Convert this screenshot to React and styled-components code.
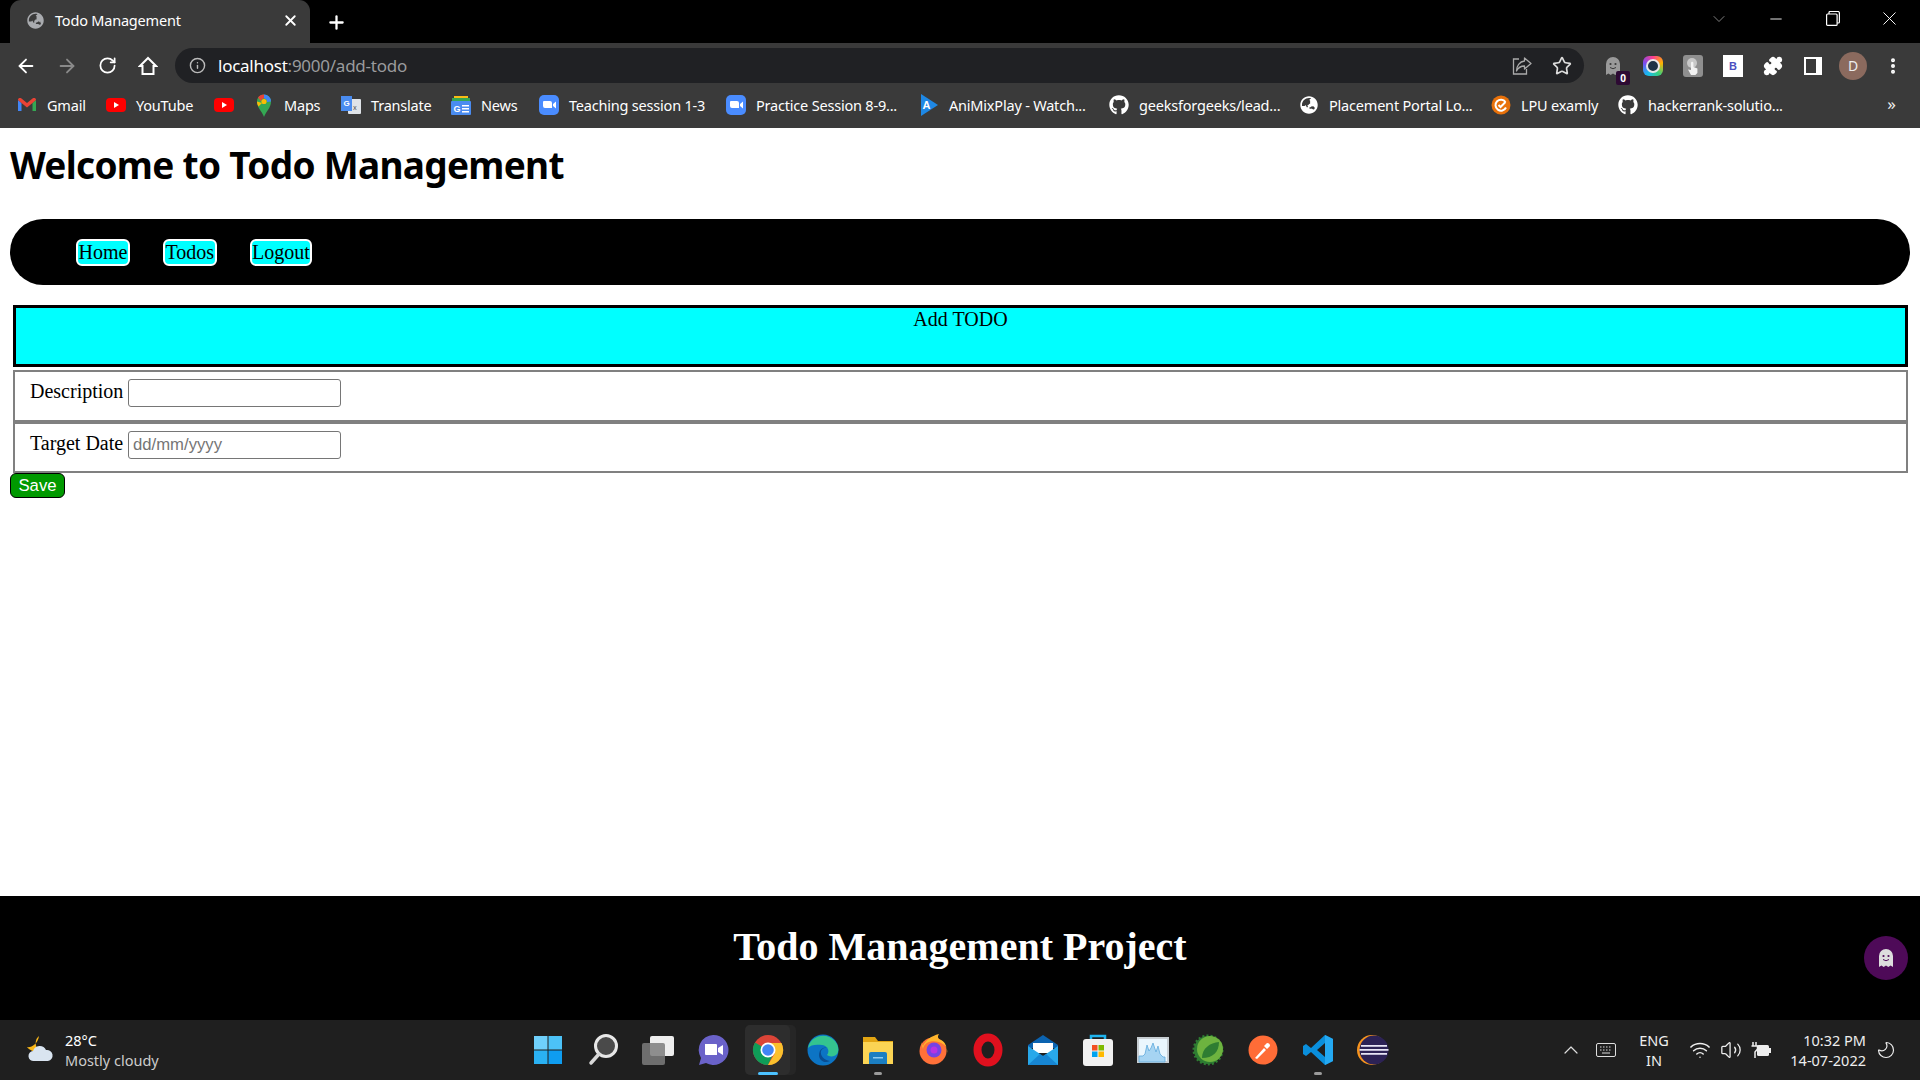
import styled, { createGlobalStyle } from 'styled-components';
import { ArrowLeft, ArrowRight, RotateCw, Info, Star, Plus, X, ChevronDown, Minus, ChevronUp, EllipsisVertical, Puzzle, Wifi, Volume2, Moon } from 'lucide-react';
import { FaGithub, FaGlobeAsia } from 'react-icons/fa';

const GlobalStyle = createGlobalStyle`
    html, body { margin: 0; padding: 0; height: 100%; background: #fff; }
    body { font-family: "Liberation Serif", serif; }
    #root { height: 100%; }
    * { box-sizing: border-box; }
`;

const uiFont = `"Noto Sans", "Open Sans", sans-serif`;

const GhostShape = ({ size = 20, color = '#ddd', face = '#4e0a58' }) => (
    <svg width={size} height={size} viewBox="0 0 20 20">
        <path d="M3 19V8a7 7 0 0 1 14 0v11l-2.400-1.600L12.300 19 10 17.400 7.700 19l-2.300-1.600z" fill={color} />
        <circle cx="7.500" cy="8" r="1.100" fill={face} />
        <circle cx="12.500" cy="8" r="1.100" fill={face} />
        <path d="M7 11.500q3 2.500 6 0" stroke={face} strokeWidth="1" fill="none" />
    </svg>
);

const ZoomIcon = () => (
    <svg width="20" height="20" viewBox="0 0 20 20">
        <rect width="20" height="20" rx="5" fill="#4a8cff" />
        <path d="M4 7a1 1 0 0 1 1-1h6a2 2 0 0 1 2 2v5H6a2 2 0 0 1-2-2zM14 9l3-2.500v7L14 11z" fill="#fff" />
    </svg>
);

const GmailIcon = () => (
    <svg width="20" height="20" viewBox="0 0 20 20">
        <path d="M1 5v11h3.500V8z" fill="#4285f4" />
        <path d="M15.500 8v8H19V5z" fill="#34a853" />
        <path d="M1 5c0-2 2-2.500 3.500-1.500L10 8l5.500-4.500C17 2.500 19 3 19 5l-3.500 3L10 12.500 4.500 8z" fill="#ea4335" />
    </svg>
);

const YoutubeIcon = () => (
    <svg width="20" height="20" viewBox="0 0 20 20">
        <rect y="3" width="20" height="14" rx="4" fill="#f00" />
        <path d="M8 7l5 3-5 3z" fill="#fff" />
    </svg>
);

const MapsIcon = () => (
    <svg width="20" height="24" viewBox="0 0 20 24">
        <path d="M10 24C8 18 3 15 3 8.500a7 7 0 0 1 14 0C17 15 12 18 10 24z" fill="#34a853" />
        <path d="M4 4.500A7 7 0 0 1 10 1.500v4a3 3 0 0 0-3 3z" fill="#ea4335" />
        <path d="M10 1.500a7 7 0 0 1 7 7l-4 .5a3 3 0 0 0-3-3.500z" fill="#4285f4" />
        <path d="M3 8.500c0 2 .5 3.500 1.500 5L8 10z" fill="#fbbc04" />
        <circle cx="10" cy="8.500" r="2.600" fill="#fbbc04" />
    </svg>
);

const TranslateIcon = () => (
    <svg width="20" height="20" viewBox="0 0 20 20">
        <rect x="7" y="4" width="13" height="15" rx="1" fill="#dfe3e8" />
        <path d="M0 1h11v15H0z" fill="#4a8cf0" />
        <text x="2.500" y="11" fontSize="8" fontWeight="700" fontFamily="Liberation Sans" fill="#fff">G</text>
        <text x="12" y="15" fontSize="7" fontFamily="Noto Sans" fill="#555">x</text>
    </svg>
);

const NewsIcon = () => (
    <svg width="20" height="20" viewBox="0 0 20 20">
        <path d="M3 1h14v4H3z" fill="#f9bc15" />
        <path d="M1 3h18v4H1z" fill="#34a853" />
        <rect y="6" width="20" height="14" rx="1" fill="#4a8cf0" />
        <text x="2.500" y="16.500" fontSize="9" fontWeight="700" fontFamily="Liberation Sans" fill="#fff">G</text>
        <path d="M11 10h7v1.500h-7zM11 13h7v1.500h-7zM11 16h7v1.500h-7z" fill="#fff" />
    </svg>
);

const AnimixIcon = () => (
    <svg width="20" height="24" viewBox="0 0 20 24">
        <path d="M2 1l17 11L2 23z" fill="#1e88e5" />
        <text x="3.500" y="16" fontSize="11" fontWeight="700" fontFamily="Liberation Sans" fill="#fff">A</text>
    </svg>
);

const LpuIcon = () => (
    <svg width="20" height="20" viewBox="0 0 20 20">
        <circle cx="10" cy="10" r="9.500" fill="#e8710a" />
        <path d="M14.500 7A5.500 5.500 0 1 0 15 12.500" stroke="#fff" strokeWidth="2" fill="none" />
        <path d="M7.500 10l2 2 5-5" stroke="#fff" strokeWidth="2" fill="none" />
    </svg>
);

const bookmarks = [
    { icon: <GmailIcon />, label: 'Gmail', width: 39 },
    { icon: <YoutubeIcon />, label: 'YouTube', width: 58 },
    { icon: <YoutubeIcon />, label: '', width: 0 },
    { icon: <MapsIcon />, label: 'Maps', width: 37 },
    { icon: <TranslateIcon />, label: 'Translate', width: 60 },
    { icon: <NewsIcon />, label: 'News', width: 38 },
    { icon: <ZoomIcon />, label: 'Teaching session 1-3', width: 137 },
    { icon: <ZoomIcon />, label: 'Practice Session 8-9...', width: 143 },
    { icon: <AnimixIcon />, label: 'AniMixPlay - Watch...', width: 140 },
    { icon: <FaGithub size={20} color="#fff" />, label: 'geeksforgeeks/lead...', width: 140 },
    { icon: <FaGlobeAsia size={18} color="#fff" />, label: 'Placement Portal Lo...', width: 142 },
    { icon: <LpuIcon />, label: 'LPU examly', width: 77 },
    { icon: <FaGithub size={20} color="#fff" />, label: 'hackerrank-solutio...', width: 135 },
];

const taskIcons = [
    <svg width="32" height="32" viewBox="0 0 32 32" key="win">
        <path d="M2 2h13.500v13.500H2z" fill="#6fd0fb" /><path d="M16.500 2H30v13.500H16.500z" fill="#4cc2f7" />
        <path d="M2 16.500h13.500V30H2z" fill="#2ab1f3" /><path d="M16.500 16.500H30V30H16.500z" fill="#0f9df0" />
    </svg>,
    <svg width="32" height="34" viewBox="0 0 32 34" key="search">
        <circle cx="19" cy="13" r="10.500" fill="#4a4a4a" stroke="#e8e8e8" strokeWidth="3" />
        <path d="M12 21l-8 9" stroke="#d8d8d8" strokeWidth="3.500" strokeLinecap="round" />
    </svg>,
    <svg width="34" height="32" viewBox="0 0 34 32" key="views">
        <rect x="9" y="2" width="24" height="20" rx="2" fill="#eee" />
        <rect x="1" y="9" width="23" height="22" rx="2" fill="#7c7c7c" opacity="0.850" />
    </svg>,
    <svg width="34" height="34" viewBox="0 0 34 34" key="teams">
        <path d="M17 2a15 15 0 1 1-7 28l-7 2 2-7A15 15 0 0 1 17 2z" fill="#6a62c9" />
        <path d="M9 11h11a1 1 0 0 1 1 1v10H10a1 1 0 0 1-1-1zM22 15l5-3v10l-5-3z" fill="#fff" />
    </svg>,
    <svg width="32" height="32" viewBox="0 0 32 32" key="chrome">
        <circle cx="16" cy="16" r="15" fill="#db4437" />
        <path d="M16 16L3 8.500A15 15 0 0 0 16 31l7-15z" fill="#0f9d58" />
        <path d="M16 9h13.500A15 15 0 0 1 16 31l7-12z" fill="#fbc02d" />
        <circle cx="16" cy="16" r="7.500" fill="#fff" /><circle cx="16" cy="16" r="5.800" fill="#4285f4" />
    </svg>,
    <svg width="34" height="34" viewBox="0 0 34 34" key="edge">
        <circle cx="17" cy="17" r="15.500" fill="#0c74c4" />
        <path d="M2 15C4 3 20-2 29 8c4 5 4 10 2 13-2 3-8 3-10 1 3-4 1-9-5-10C10 11 4 12 2 15z" fill="#34c48f" />
        <path d="M13 22c0-6 5-9 9-7-2-1-6 0-7 3-1 5 3 9 9 10-6 3-11-1-11-6z" fill="#0a4d91" />
    </svg>,
    <svg width="32" height="32" viewBox="0 0 32 32" key="folder">
        <path d="M1 3h12l3 4h15v4H1z" fill="#e3a512" />
        <path d="M1 8h30v22H1z" fill="#fbd454" />
        <path d="M7 20a2 2 0 0 1 2-2h14a2 2 0 0 1 2 2v10H7z" fill="#1b7ec2" />
        <path d="M11 23h10v1.500H11z" fill="#8ccbf0" />
    </svg>,
    <svg width="32" height="34" viewBox="0 0 32 34" key="firefox">
        <circle cx="16" cy="18" r="13.500" fill="#ff7139" />
        <path d="M4 9l2 4C9 7 14 3 22 1c-2 3-1 5 2 6 5 2 6 8 6 13 3-12-22-17-24-4z" fill="#ffb52c" />
        <circle cx="17" cy="17" r="7.500" fill="#7543e3" />
        <circle cx="17" cy="17" r="3.500" fill="#b833e1" />
    </svg>,
    <svg width="32" height="34" viewBox="0 0 32 34" key="opera">
        <ellipse cx="16" cy="17" rx="10.500" ry="12.500" fill="none" stroke="#e0101e" strokeWidth="8" />
    </svg>,
    <svg width="32" height="30" viewBox="0 0 32 30" key="mail">
        <path d="M1 10L16 0l15 10v3H1z" fill="#0b63b0" />
        <path d="M6 8h20v10H6z" fill="#fff" />
        <path d="M1 11l15 10 15-10v19H1z" fill="#28a8ea" />
        <path d="M1 30l12-11 3 2 3-2 12 11z" fill="#0f78c9" opacity="0.700" />
    </svg>,
    <svg width="32" height="34" viewBox="0 0 32 34" key="store">
        <path d="M9 8V3h14v5" fill="none" stroke="#1fb5f0" strokeWidth="2.500" />
        <rect x="1" y="6" width="30" height="27" rx="3" fill="#f1f1f1" />
        <path d="M10 12h5.500v5.500H10z" fill="#f25022" /><path d="M16.500 12H22v5.500h-5.500z" fill="#7fba00" />
        <path d="M10 18.500h5.500V24H10z" fill="#00a4ef" /><path d="M16.500 18.500H22V24h-5.500z" fill="#ffb900" />
    </svg>,
    <svg width="32" height="26" viewBox="0 0 32 26" key="monitor">
        <rect width="32" height="26" fill="#c7cdd2" />
        <rect x="2" y="2" width="28" height="22" fill="#eaf6fd" />
        <path d="M2 19h4l2-2 2-9 2 6 2-3 2-5 3 9 2-6 2 8 3 3 2 0v5H2z" fill="#a6d4f2" stroke="#5fa9dc" strokeWidth="0.800" />
    </svg>,
    <svg width="32" height="32" viewBox="0 0 32 32" key="spring">
        <circle cx="16" cy="16" r="14" fill="#2e7d32" stroke="#2e7d32" strokeWidth="3" strokeDasharray="2 2" />
        <circle cx="18" cy="15" r="13" fill="#6db33f" />
        <path d="M10 24C10 14 18 9 27 8c0 10-6 16-17 16z" fill="#2e7d32" />
    </svg>,
    <svg width="30" height="30" viewBox="0 0 30 30" key="postman">
        <circle cx="15" cy="15" r="14.500" fill="#ff6c37" />
        <path d="M7 23l9-10 2 2-9 9zM16 11l3-3a3 3 0 0 1 3 3l-3 3z" fill="#fff" />
    </svg>,
    <svg width="32" height="32" viewBox="0 0 32 32" key="vscode">
        <path d="M23 1l8 4v22l-8 4L9 18l-5 4-3-2v-8l3-2 5 4zM23 9l-8 7 8 7z" fill="#0a8fdc" />
        <path d="M23 1l8 4v22l-8 4z" fill="#24a9f2" />
    </svg>,
    <svg width="32" height="32" viewBox="0 0 32 32" key="eclipse">
        <circle cx="15" cy="16" r="15" fill="#f7941e" />
        <circle cx="17" cy="16" r="14.500" fill="#2c2255" />
        <path d="M4 11h26v1.800H4zM2.500 15h29v1.800h-29zM4 19h26v1.800H4z" fill="#e8e6f5" />
    </svg>,
];

const App = () => {
    return (
        <>
            <GlobalStyle />
            <Screen>
                <TabStrip>
                    <Tab>
                        <FaGlobeAsia size={17} color="#a9abaf" />
                        <TabTitle>Todo Management</TabTitle>
                        <X size={17} color="#fff" strokeWidth={2.6} />
                    </Tab>
                    <NewTab><Plus size={21} color="#fff" strokeWidth={2.6} /></NewTab>
                    <WindowControls>
                        <ChevronDown size={20} color="#999" strokeWidth={1} />
                        <Minus size={18} color="#fff" strokeWidth={1.200} />
                        <svg width="14" height="15" viewBox="0 0 14 15" fill="none" stroke="#fff" strokeWidth="1.200">
                            <rect x="0.600" y="3" width="10.500" height="11.400" rx="1" />
                            <path d="M3 3V1.500a1 1 0 0 1 1-1h8a1.500 1.500 0 0 1 1.400 1.400V11a1 1 0 0 1-1 1h-1.300" />
                        </svg>
                        <X size={23} color="#fff" strokeWidth={1} />
                    </WindowControls>
                </TabStrip>
                <Toolbar>
                    <NavIcons>
                        <ArrowLeft size={22} color="#fff" strokeWidth={2} />
                        <ArrowRight size={22} color="#8a8a8a" strokeWidth={2} />
                        <RotateCw size={19} color="#fff" strokeWidth={2.200} />
                        <svg width="20" height="20" viewBox="0 0 20 20" fill="none" stroke="#fff" strokeWidth="2">
                            <path d="M10 2L2 10h2.500v8h11v-8H18z" strokeLinejoin="miter" />
                        </svg>
                    </NavIcons>
                    <AddressBar>
                        <Info size={17} color="#bbb" strokeWidth={2} />
                        <Url><b>localhost</b>:9000/add-todo</Url>
                        <AddressEnd>
                            <svg width="20" height="20" viewBox="0 0 20 20" fill="none" stroke="#aaa" strokeWidth="1.300">
                                <path d="M7 3H1.500v15h13v-5" />
                                <path d="M12.500 2L19 7.500 12.500 13V10C8 10 6 12 4.500 15c0-5 3-9.500 8-10z" strokeLinejoin="round" />
                            </svg>
                            <Star size={20} color="#ddd" strokeWidth={2} />
                        </AddressEnd>
                    </AddressBar>
                    <Extensions>
                        <ExtSlot>
                            <GhostShape size={20} color="#9a9a9a" face="#3a3a3a" />
                            <Badge>0</Badge>
                        </ExtSlot>
                        <ExtSlot>
                            <RainbowRing><InnerLens /></RainbowRing>
                        </ExtSlot>
                        <ExtSlot>
                            <GreyTile>
                                <svg width="14" height="18" viewBox="0 0 14 18">
                                    <circle cx="6" cy="6" r="5" fill="#c8c8c8" />
                                    <path d="M5 6a1.200 1.200 0 0 1 2.400 0v4l4 1.500V16l-2 2H5L2 12.500 5 13z" fill="#f2f2f2" />
                                </svg>
                            </GreyTile>
                        </ExtSlot>
                        <ExtSlot><BTile>B</BTile></ExtSlot>
                        <ExtSlot><Puzzle size={20} color="#fff" fill="#fff" /></ExtSlot>
                        <ExtSlot><SidePanel /></ExtSlot>
                        <ExtSlot><Avatar>D</Avatar></ExtSlot>
                        <ExtSlot><EllipsisVertical size={20} color="#fff" strokeWidth={2.800} /></ExtSlot>
                    </Extensions>
                </Toolbar>
                <BookmarkBar>
                    {bookmarks.map((item, i) => (
                        <Bookmark key={`${item.label}-${i}`}>
                            <BookmarkIcon>{item.icon}</BookmarkIcon>
                            {item.label && <BookmarkLabel $width={item.width}>{item.label}</BookmarkLabel>}
                        </Bookmark>
                    ))}
                    <MoreBookmarks>»</MoreBookmarks>
                </BookmarkBar>

                <Page>
                    <Heading>Welcome to Todo Management</Heading>
                    <NavBar>
                        <NavButton>Home</NavButton>
                        <NavButton>Todos</NavButton>
                        <NavButton>Logout</NavButton>
                    </NavBar>
                    <FormTable>
                        <FormTitle>Add TODO</FormTitle>
                        <FormRow>
                            <FieldLabel>Description</FieldLabel>
                            <FieldInput type="text" />
                        </FormRow>
                        <FormRow>
                            <FieldLabel>Target Date</FieldLabel>
                            <FieldInput type="text" placeholder="dd/mm/yyyy" />
                        </FormRow>
                    </FormTable>
                    <SaveButton>Save</SaveButton>
                </Page>

                <Footer>
                    <FooterTitle>Todo Management Project</FooterTitle>
                    <FloatingGhost><GhostShape size={20} /></FloatingGhost>
                </Footer>

                <Taskbar>
                    <Weather>
                        <svg width="30" height="30" viewBox="0 0 30 30">
                            <path d="M14 1a9 9 0 0 0 0 14 9 9 0 0 1-12-3c4 1 11-3 12-11z" fill="#f9b719" />
                            <path d="M9 26a5 5 0 0 1-1-10 7 7 0 0 1 13-1 5.500 5.500 0 0 1 2 11z" fill="#d9e4f0" />
                        </svg>
                        <WeatherText>
                            <span>28°C</span>
                            <WeatherSub>Mostly cloudy</WeatherSub>
                        </WeatherText>
                    </Weather>
                    <TaskIcons>
                        {taskIcons.map((icon, i) => (
                            <TaskIcon key={i} $active={i === 4} $dot={i === 6 || i === 14}>{icon}</TaskIcon>
                        ))}
                    </TaskIcons>
                    <Tray>
                        <ChevronUp size={24} color="#ddd" strokeWidth={1.200} />
                        <svg width="20" height="14" viewBox="0 0 20 14">
                            <rect x="0.500" y="0.500" width="19" height="13" rx="1.500" fill="none" stroke="#ddd" />
                            <path d="M4 4h1.500M7 4h1.500M10 4h1.500M13 4h1.500M4 7h1.500M7 7h1.500M10 7h1.500M13 7h1.500M6 10h8" stroke="#ddd" />
                        </svg>
                        <Lang>ENG<br />IN</Lang>
                        <Wifi size={22} color="#eee" strokeWidth={1.600} />
                        <Volume2 size={22} color="#eee" strokeWidth={1.400} />
                        <svg width="20" height="18" viewBox="0 0 20 18">
                            <rect x="6" y="4" width="12" height="11" rx="1.500" fill="#eee" />
                            <rect x="18" y="7" width="2" height="5" fill="#eee" />
                            <path d="M2 1v4M5 1v4M0.500 5h6v3L4 11v6" stroke="#eee" strokeWidth="1.500" fill="none" />
                        </svg>
                        <Clock>10:32 PM<br />14-07-2022</Clock>
                        <FlippedMoon size={20} color="#eee" strokeWidth={1.400} />
                    </Tray>
                </Taskbar>
            </Screen>
        </>
    );
};

export default App;

const Screen = styled.div`
    display: flex;
    flex-direction: column;
    height: 100vh;
    overflow: hidden;
`;

const TabStrip = styled.header`
    display: flex;
    align-items: flex-end;
    height: 43px;
    padding-left: 10px;
    background: #000;
`;

const Tab = styled.div`
    display: flex;
    align-items: center;
    width: 300px;
    height: 43px;
    padding: 0 11px 3px 17px;
    border-radius: 11px 11px 0 0;
    background: #3a3a3a;
    color: #fff;
`;

const TabTitle = styled.span`
    flex: 1;
    margin-left: 11px;
    font: 14.500px ${uiFont};
    letter-spacing: -0.200px;
`;

const NewTab = styled.div`
    display: flex;
    align-items: center;
    height: 41px;
    margin-left: 16px;
`;

const WindowControls = styled.div`
    display: grid;
    grid-template-columns: repeat(4, 57px);
    justify-items: center;
    align-items: center;
    height: 37px;
    margin-left: auto;
    padding-right: 2px;
    align-self: flex-start;
`;

const Toolbar = styled.div`
    display: flex;
    align-items: center;
    height: 43px;
    padding: 5px 0 3px 0;
    background: #3a3a3a;
`;

const NavIcons = styled.div`
    display: grid;
    grid-template-columns: repeat(4, 40.500px);
    justify-items: center;
    align-items: center;
    width: 175px;
    padding-left: 6px;
`;

const AddressBar = styled.div`
    display: flex;
    align-items: center;
    width: 1409px;
    height: 35px;
    padding: 0 12px 0 14px;
    border-radius: 18px;
    background: #202124;
`;

const Url = styled.span`
    margin-left: 12px;
    font: 17px ${uiFont};
    letter-spacing: -0.250px;
    color: #9a9b9d;
    b { color: #fff; font-weight: 400; }
`;

const AddressEnd = styled.div`
    display: flex;
    align-items: center;
    gap: 20px;
    margin-left: auto;
`;

const Extensions = styled.div`
    display: grid;
    grid-template-columns: repeat(8, 40px);
    padding-left: 9px;
`;

const ExtSlot = styled.div`
    position: relative;
    display: flex;
    justify-content: center;
    align-items: center;
    height: 28px;
`;

const Badge = styled.span`
    position: absolute;
    right: 3px;
    bottom: -5px;
    width: 14px;
    height: 14px;
    border-radius: 2px;
    background: #2d0a33;
    color: #fff;
    font: 700 10px/14px ${uiFont};
    text-align: center;
`;

const RainbowRing = styled.div`
    display: flex;
    justify-content: center;
    align-items: center;
    width: 20px;
    height: 20px;
    border-radius: 6px;
    background: conic-gradient(#ff3d8b, #ffb300, #35d07f, #18b9f0, #7a4cf0, #ff3d8b);
`;

const InnerLens = styled.div`
    width: 14px;
    height: 14px;
    border: 2px solid #e8e8e8;
    border-radius: 50%;
    background: #1e3347;
`;

const GreyTile = styled.div`
    display: flex;
    justify-content: center;
    align-items: center;
    width: 20px;
    height: 22px;
    border-radius: 3px;
    background: #8f8f8f;
`;

const BTile = styled.div`
    width: 20px;
    height: 22px;
    background: #fff;
    color: #4a4fc0;
    font: 700 11px/22px "Liberation Sans", sans-serif;
    text-align: center;
`;

const SidePanel = styled.div`
    width: 18px;
    height: 18px;
    border: solid #fff;
    border-width: 2px 6px 2px 2px;
    background: #3a3a3a;
`;

const Avatar = styled.div`
    width: 28px;
    height: 28px;
    border-radius: 50%;
    background: #8b6a5e;
    color: #eee;
    font: 14px/28px ${uiFont};
    text-align: center;
`;

const BookmarkBar = styled.nav`
    display: flex;
    align-items: center;
    gap: 20px;
    height: 42px;
    padding: 0 0 4px 17px;
    background: #3a3a3a;
`;

const Bookmark = styled.div`
    display: flex;
    align-items: center;
    gap: 10px;
    color: #fff;
`;

const BookmarkIcon = styled.span`
    display: flex;
    justify-content: center;
    align-items: center;
    width: 20px;
    height: 24px;
`;

const BookmarkLabel = styled.span`
    width: ${(props) => props.$width}px;
    font: 14.500px ${uiFont};
    letter-spacing: -0.200px;
    white-space: nowrap;
`;

const MoreBookmarks = styled.span`
    margin-left: auto;
    margin-right: 24px;
    margin-bottom: 3px;
    color: #eee;
    font: 17px ${uiFont};
`;

const Page = styled.main`
    flex: 1;
    padding: 0 10px;
    background: #fff;
`;

const Heading = styled.h1`
    margin: 12px 0 29px;
    font: 700 37px/50px ${uiFont};
    letter-spacing: -0.700px;
    color: #000;
`;

const NavBar = styled.div`
    display: flex;
    align-items: center;
    gap: 33px;
    height: 66px;
    padding-left: 66px;
    border-radius: 33px;
    background: #000;
`;

const NavButton = styled.a`
    padding: 0 0.500px;
    border: 2px solid #fff;
    border-radius: 6px;
    background: #0ff;
    color: #000;
    font: 20px/23px "Liberation Serif", serif;
`;

const FormTable = styled.section`
    display: flex;
    flex-direction: column;
    margin: 20px 2px 0 3px;
`;

const FormTitle = styled.div`
    height: 62px;
    margin-bottom: 3px;
    border: 3px solid #000;
    background: #0ff;
    color: #000;
    font: 20px/22px "Liberation Serif", serif;
    text-align: center;
`;

const FormRow = styled.div`
    display: flex;
    align-items: flex-start;
    height: 51.500px;
    padding: 7px 0 0 15px;
    border: 2px solid #808080;
`;

const FieldLabel = styled.label`
    width: 93px;
    margin-top: 1px;
    color: #000;
    font: 20px/23px "Liberation Serif", serif;
    text-align: right;
    white-space: nowrap;
`;

const FieldInput = styled.input`
    width: 213px;
    height: 28px;
    margin: 0 0 0 5px;
    padding: 1px 4px;
    border: 1px solid #767676;
    border-radius: 3px;
    background: #fff;
    font: 16.700px "Liberation Sans", sans-serif;
    &::placeholder { color: #757575; opacity: 1; }
`;

const SaveButton = styled.button`
    display: block;
    width: 55px;
    height: 25px;
    margin-top: 0;
    padding: 0;
    border: 1px solid #000;
    border-radius: 6px;
    background: #090;
    color: #fff;
    font: 16.700px/20px "Liberation Sans", sans-serif;
`;

const Footer = styled.footer`
    position: relative;
    height: 124px;
    padding-top: 28px;
    background: #000;
`;

const FooterTitle = styled.h2`
    margin: 0;
    color: #fff;
    font: 700 40px/46px "Liberation Serif", serif;
    text-align: center;
`;

const FloatingGhost = styled.div`
    position: absolute;
    top: 40px;
    right: 12px;
    display: flex;
    justify-content: center;
    align-items: center;
    width: 44px;
    height: 44px;
    border-radius: 50%;
    background: #4e0a58;
`;

const Taskbar = styled.div`
    display: grid;
    grid-template-columns: 1fr auto 1fr;
    align-items: center;
    height: 60px;
    background: #1f1f1f;
    color: #fff;
`;

const Weather = styled.div`
    display: flex;
    align-items: center;
    gap: 10px;
    padding-left: 25px;
`;

const WeatherText = styled.div`
    display: flex;
    flex-direction: column;
    font: 14.500px/20px ${uiFont};
`;

const WeatherSub = styled.span`
    color: #ccc;
`;

const TaskIcons = styled.div`
    display: grid;
    grid-template-columns: repeat(16, 55px);
`;

const TaskIcon = styled.div`
    position: relative;
    display: flex;
    justify-content: center;
    align-items: center;
    height: 50px;
    margin: 0 5px;
    border-radius: 5px;
    background: ${(props) => (props.$active ? '#2d2d2d' : 'transparent')};
    box-shadow: ${(props) => (props.$active ? '6px 0 0 0 #262626' : 'none')};
    &::after {
        content: '';
        position: absolute;
        bottom: 0;
        left: 50%;
        display: ${(props) => (props.$active || props.$dot ? 'block' : 'none')};
        width: ${(props) => (props.$active ? 20 : 8)}px;
        height: 3px;
        border-radius: 2px;
        background: ${(props) => (props.$active ? '#4cc2ff' : '#9a9a9a')};
        transform: translateX(-50%);
    }
`;

const Tray = styled.div`
    display: grid;
    grid-template-columns: 34px 36px 60px 32px 30px 30px 92px 36px;
    justify-content: end;
    justify-items: center;
    align-items: center;
    padding-right: 16px;
`;

const Lang = styled.div`
    color: #eee;
    font: 14.500px/20px ${uiFont};
    text-align: center;
`;

const Clock = styled.div`
    justify-self: end;
    padding-right: 2px;
    color: #eee;
    font: 14.500px/20px ${uiFont};
    text-align: right;
`;

const FlippedMoon = styled(Moon)`
    transform: scaleX(-1);
`;
